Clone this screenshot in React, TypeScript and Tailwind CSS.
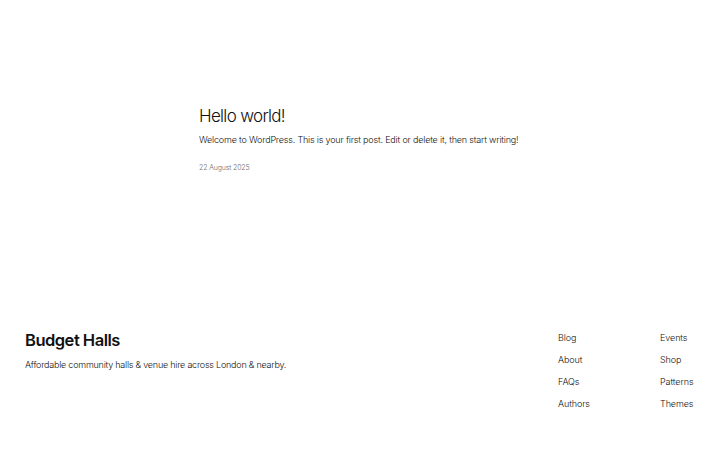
export default function App() {
  const colA = ["Blog", "About", "FAQs", "Authors"];
  const colB = ["Events", "Shop", "Patterns", "Themes"];

  return (
    <div
      className="flex h-[450px] w-[720px] flex-col bg-white text-[#111111]"
      style={{ fontFamily: "Inter, 'Noto Sans', sans-serif" }}
    >
      <main className="flex h-[318px] flex-col pl-[199px] pt-[104px]">
        <h2 className="text-[17px] font-light leading-[24px] tracking-[-0.04em]">
          Hello world!
        </h2>
        <p className="mt-[4px] text-[9px] font-light leading-[16px] tracking-[-0.02em]">
          Welcome to WordPress. This is your first post. Edit or delete it, then start writing!
        </p>
        <p className="mt-[15px] text-[7px] font-light tracking-[-0.02em] text-[#707070]">
          22 August 2025
        </p>
      </main>

      <footer className="flex px-[25px]">
        <div className="flex flex-1 flex-col pt-[11px]">
          <h1 className="text-[16.5px] font-semibold leading-[22px] tracking-[-0.03em]">
            Budget Halls
          </h1>
          <p className="mt-[7px] text-[9px] font-light leading-[14px] tracking-[-0.025em]">
            Affordable community halls &amp; venue hire across London &amp; nearby.
          </p>
        </div>
        <nav className="flex pt-[13px]">
          <ul className="flex w-[102px] flex-col gap-[8px]">
            {colA.map((l) => (
              <li key={l} className="text-[9px] font-light leading-[14px] tracking-[-0.01em]">
                {l}
              </li>
            ))}
          </ul>
          <ul className="flex w-[35px] flex-col gap-[8px]">
            {colB.map((l) => (
              <li
                key={l}
                className="whitespace-nowrap text-[9px] font-light leading-[14px] tracking-[-0.01em]"
              >
                {l}
              </li>
            ))}
          </ul>
        </nav>
      </footer>
    </div>
  );
}
